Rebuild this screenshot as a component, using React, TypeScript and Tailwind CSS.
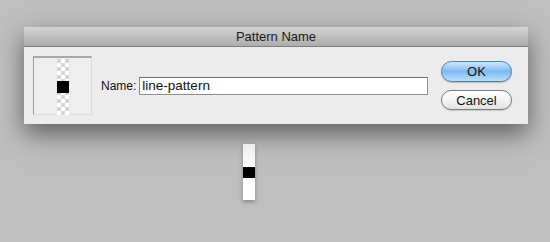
import React from "react";

const font = { fontFamily: '"Liberation Sans", Arial, sans-serif' };

function Checker({ h, id }: { h: number; id: string }) {
  return (
    <svg width="12" height={h} className="block">
      <defs>
        <pattern id={id} width="8" height="8" patternUnits="userSpaceOnUse">
          <rect width="8" height="8" fill="#ffffff" />
          <rect width="4" height="4" fill="#d6d6d6" />
          <rect x="4" y="4" width="4" height="4" fill="#d6d6d6" />
        </pattern>
      </defs>
      <rect width="12" height={h} fill={`url(#${id})`} />
      <rect y={(h - 12) / 2} width="12" height="12" fill="#000" />
    </svg>
  );
}

export default function App() {
  return (
    <div
      className="w-[550px] h-[242px] overflow-hidden bg-[#bfbfbf] pt-[27px]"
      style={font}
    >
      {/* Dialog */}
      <div className="ml-[24px] w-[504px] bg-[#ececec] shadow-[0_10px_24px_rgba(0,0,0,0.5)]">
        <div className="h-[20px] flex items-center justify-center bg-gradient-to-b from-[#d4d4d4] to-[#acacac] border-b border-[#7e7e7e] text-[13px] text-[#1a1a1a]">
          Pattern Name
        </div>
        <div className="h-[77px] flex items-center pl-[9px] pr-[16px]">
          <div className="w-[59px] h-[59px] flex items-center justify-center border-t-2 border-l border-t-[#a9a9a9] border-l-[#9c9c9c] border-r border-b border-r-[#dcdcdc] border-b-[#dcdcdc] bg-[#eeeeee] pt-px">
            <Checker h={56} id="chk1" />
          </div>
          <span className="ml-[9px] mr-[3px] text-[12px] text-[#111]">Name:</span>
          <div className="w-[289px] h-[18px] bg-white border border-[#8e8e8e] border-t-[#6f6f6f] flex items-center pl-[2px] text-[13.5px] text-[#111] leading-none">
            line-pattern
          </div>
          <div className="ml-auto flex flex-col gap-[8px] w-[71px]">
            <button className="h-[21px] rounded-full border border-[#4d7fb4] bg-gradient-to-b from-[#cfe6fb] via-[#7fbaf0] to-[#b9defc] text-[13px] text-[#111] leading-none shadow-[0_1px_1px_rgba(0,0,0,0.2)]">
              OK
            </button>
            <button className="h-[20px] rounded-full border border-[#7d7d7d] bg-gradient-to-b from-white via-[#f4f4f4] to-[#e2e2e2] text-[13px] text-[#111] leading-none shadow-[0_1px_1px_rgba(0,0,0,0.15)]">
              Cancel
            </button>
          </div>
        </div>
      </div>

      {/* Pattern preview on canvas */}
      <div className="ml-[243px] mt-[20px] w-[12px] h-[56px] shadow-[0_2px_4px_rgba(0,0,0,0.3)] flex flex-col">
        <div className="h-[23px] bg-gradient-to-b from-[#ececec] to-white" />
        <div className="h-[11px] bg-black" />
        <div className="flex-1 bg-white" />
      </div>
    </div>
  );
}
